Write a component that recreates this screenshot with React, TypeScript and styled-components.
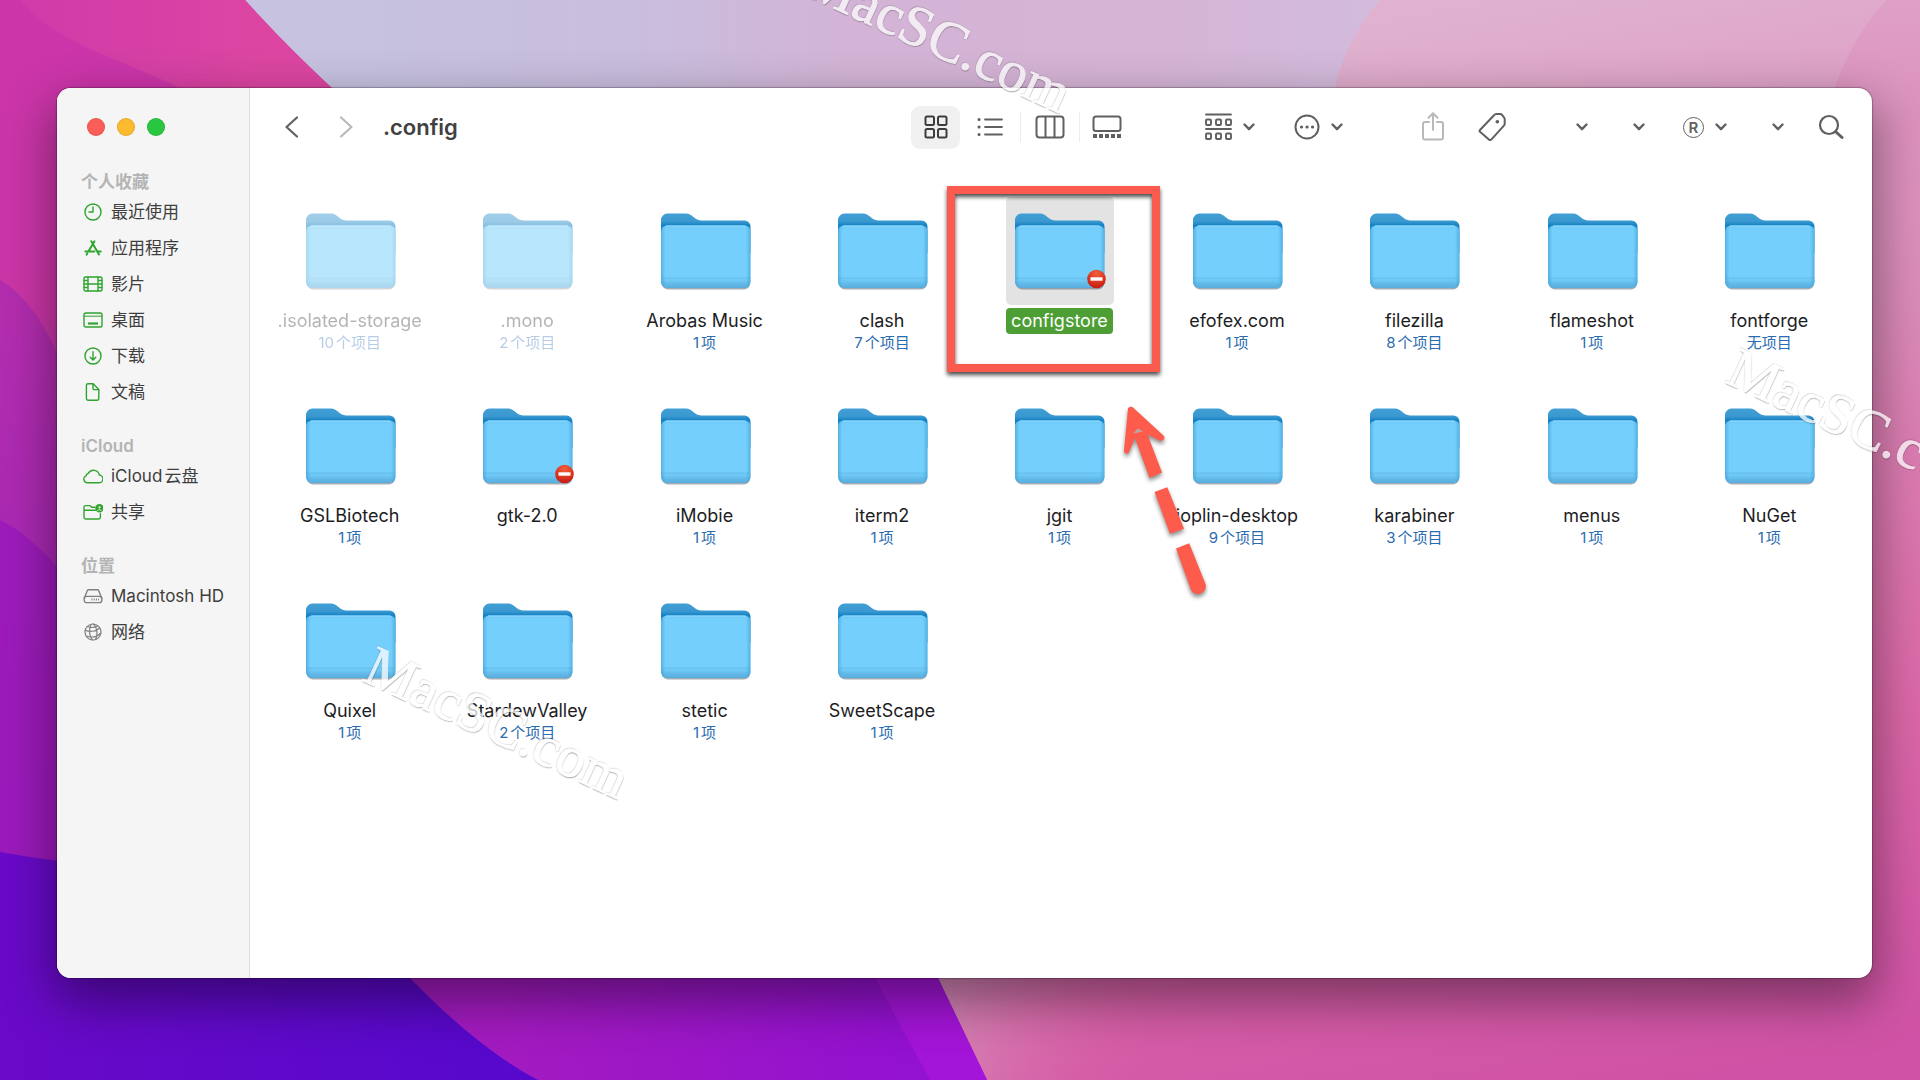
import React from 'react';
import styled, { createGlobalStyle, css } from 'styled-components';

const GlobalStyle = createGlobalStyle`
  *, *::before, *::after { box-sizing: border-box; }
  body {
    margin: 0;
    font-family: Inter, "Noto Sans CJK SC", sans-serif;
    color: #1d1d1f;
    text-autospace: normal;
  }
  button { border: 0; padding: 0; background: none; font: inherit; color: inherit; }
  ul { list-style: none; margin: 0; padding: 0; }
  svg { display: block; }
`;

/* ---------- Desktop ---------- */

const Desktop = styled.div`
  position: relative;
  display: flex;
  min-height: 100vh;
  padding: 88px 48px 102px 57px;
  overflow: hidden;
`;

const WallpaperSvg = styled.svg`
  position: absolute;
  inset: 0;
  width: 100%;
  height: 100%;
`;

const Wallpaper = () => (
  <WallpaperSvg viewBox="0 0 1920 1080" preserveAspectRatio="none" aria-hidden="true">
    <defs>
      <linearGradient id="wpTop" x1="0" x2="1" y1="0" y2="0">
        <stop offset="0.12" stopColor="#c6c2e0" />
        <stop offset="0.38" stopColor="#c9bddd" />
        <stop offset="0.55" stopColor="#d3b4d6" />
        <stop offset="0.8" stopColor="#d6b4d6" />
        <stop offset="1" stopColor="#d2bbdc" />
      </linearGradient>
      <linearGradient id="wpRight" gradientUnits="userSpaceOnUse" x1="1500" x2="1700" y1="0" y2="1080">
        <stop offset="0" stopColor="#e0b2d0" />
        <stop offset="0.3" stopColor="#dc8dba" />
        <stop offset="0.7" stopColor="#dc68a8" />
        <stop offset="1" stopColor="#d052a6" />
      </linearGradient>
      <linearGradient id="wpBottom" gradientUnits="userSpaceOnUse" x1="930" x2="1150" y1="980" y2="1050">
        <stop offset="0" stopColor="#d48cba" />
        <stop offset="1" stopColor="#da64a2" stopOpacity="0" />
      </linearGradient>
      <linearGradient id="wpCorner" x1="0" x2="0" y1="0" y2="1">
        <stop offset="0" stopColor="#dfa0c6" />
        <stop offset="0.3" stopColor="#dc90bc" stopOpacity="0.9" />
        <stop offset="1" stopColor="#dc8ebb" stopOpacity="0" />
      </linearGradient>
      <linearGradient id="wpLeft" gradientUnits="userSpaceOnUse" x1="0" x2="120" y1="0" y2="900">
        <stop offset="0" stopColor="#cc35aa" />
        <stop offset="0.35" stopColor="#cb36a8" />
        <stop offset="0.6" stopColor="#b32bb2" />
        <stop offset="1" stopColor="#9620c0" />
      </linearGradient>
      <linearGradient id="wpPetal" gradientUnits="userSpaceOnUse" x1="20" x2="260" y1="0" y2="0">
        <stop offset="0" stopColor="#d03aaa" />
        <stop offset="1" stopColor="#dc46a2" />
      </linearGradient>
      <linearGradient id="wpMid" gradientUnits="userSpaceOnUse" x1="500" x2="900" y1="0" y2="0">
        <stop offset="0" stopColor="#a31bc0" />
        <stop offset="1" stopColor="#9311d0" />
      </linearGradient>
      <linearGradient id="wpBlue" x1="0" x2="1" y1="0" y2="0">
        <stop offset="0" stopColor="#6a0ac8" />
        <stop offset="1" stopColor="#5508cc" />
      </linearGradient>
    </defs>
    <rect width="1920" height="1080" fill="url(#wpRight)" />
    <rect x="800" y="900" width="500" height="180" fill="url(#wpBottom)" />
    <path d="M200 0H1380Q1345 40 1333 95V140H200Z" fill="url(#wpTop)" />
    <path d="M1920 0H1886Q1850 40 1830 100V420H1920Z" fill="url(#wpCorner)" />
    <path d="M0 0H245Q290 50 345 100L960 1080H0Z" fill="url(#wpLeft)" />
    <path d="M20 0H245Q290 50 345 100H200C150 66 60 50 20 0Z" fill="url(#wpPetal)" />
    <path d="M0 280Q35 300 60 360V1080H0Z" fill="#a428b4" opacity="0.6" />
    <path d="M0 520Q30 535 60 570V1080H0Z" fill="#9a18bc" opacity="0.8" />
    <path d="M300 900H901L938 978L987 1080H300Z" fill="url(#wpMid)" />
    <path d="M833 900H901L938 978L987 1080H930L875 978Z" fill="#a315d8" />
    <path d="M0 852C150 878 320 880 410 978Q480 1050 538 1080H0Z" fill="url(#wpBlue)" />
  </WallpaperSvg>
);

const Window = styled.main`
  position: relative;
  display: flex;
  flex: 1;
  min-width: 0;
  border-radius: 14px;
  background: #fff;
  box-shadow: 0 0 1px 1px rgba(0, 0, 0, 0.25), 0 20px 50px 4px rgba(0, 0, 0, 0.42);
`;

/* ---------- Sidebar ---------- */

const Sidebar = styled.aside`
  display: flex;
  flex-direction: column;
  flex: none;
  width: 193px;
  padding: 30px 0 24px;
  border-right: 1px solid #dcdcdc;
  border-radius: 14px 0 0 14px;
  background: #f5f5f5;
`;

const Lights = styled.div`
  display: flex;
  gap: 12px;
  padding: 0 0 10px 30px;
`;

const Light = styled.button<{ $color: string }>`
  width: 18px;
  height: 18px;
  border-radius: 50%;
  background: ${(p) => p.$color};
  box-shadow: inset 0 0 0 1px rgba(0, 0, 0, 0.1);
`;

const SideSection = styled.section`
  padding: 24px 0 0 24px;
`;

const SideHeading = styled.h2`
  margin: 0;
  font-size: 17px;
  line-height: 24px;
  font-weight: 600;
  color: #b4b4b4;
`;

const SideLink = styled.a<{ $tone: string }>`
  display: flex;
  align-items: center;
  gap: 8px;
  height: 36px;
  padding-left: 2px;
  font-size: 17px;
  line-height: 24px;
  color: #3e3e3e;
  text-decoration: none;
  white-space: nowrap;
  svg { flex: none; color: ${(p) => p.$tone}; }
`;

const SideSvg = ({ children }: { children: React.ReactNode }) => (
  <svg
    width="20"
    height="20"
    viewBox="0 0 20 20"
    fill="none"
    stroke="currentColor"
    strokeWidth="1.4"
    strokeLinecap="round"
    strokeLinejoin="round"
    aria-hidden="true"
  >
    {children}
  </svg>
);

const sideIcons: Record<string, React.ReactNode> = {
  clock: (
    <>
      <circle cx="10" cy="10" r="8" />
      <path d="M10 5v5H6" />
    </>
  ),
  apps: (
    <g strokeWidth="2">
      <path d="M8.3 3.2 16 16.4M11.4 3.4 5.5 13.2M2.4 13.4h9M15 13.4h2.7M4.3 15.6l-.6 1" />
    </g>
  ),
  film: (
    <>
      <rect x="1" y="3" width="18" height="14" rx="1.5" />
      <path d="M5 3v14M15 3v14M5 10h10M1 6.5h4M1 10h4M1 13.5h4M15 6.5h4M15 10h4M15 13.5h4" />
    </>
  ),
  desktop: (
    <>
      <rect x="1" y="3" width="18" height="14" rx="1.8" />
      <path d="M1 6.2h18" strokeWidth="1" />
      <path d="M5 13.5h10" strokeWidth="2.2" strokeLinecap="butt" />
    </>
  ),
  download: (
    <>
      <circle cx="10" cy="10" r="8" />
      <path d="M10 5.8v8M7.2 11.2 10 14l2.8-2.8" />
    </>
  ),
  doc: (
    <path d="M5 1.8h5.2l5.6 5.6v9.2a1.6 1.6 0 0 1-1.6 1.6H5a1.6 1.6 0 0 1-1.6-1.6V3.4A1.6 1.6 0 0 1 5 1.8ZM10 2v4.400c0 .8.4 1.200 1.200 1.200h4.400" />
  ),
  cloud: (
    <path d="M4.500 16.800h11.200a3.900 3.900 0 0 0 .6-7.800A5.900 5.900 0 0 0 5.300 7.400 3 3 0 0 0 3 9.900 3.600 3.600 0 0 0 4.500 16.800Z" />
  ),
  shared: (
    <>
      <path d="M12 5.2H8.500L7.200 3.600H2.500a1.500 1.500 0 0 0-1.500 1.500v10.200A1.700 1.700 0 0 0 2.700 17h13a1.700 1.700 0 0 0 1.700-1.700v-3.500M1 8.200h11.500" />
      <circle cx="16.500" cy="6.200" r="3.500" fill="currentColor" />
      <path d="M14.800 8.400c.4-1.200 3-1.200 3.400 0" stroke="#f5f5f5" strokeWidth="1" />
      <circle cx="16.500" cy="5.300" r="1.100" fill="#f5f5f5" stroke="none" />
    </>
  ),
  disk: (
    <>
      <path d="M1.200 12.200 4.300 4.800a1.600 1.600 0 0 1 1.500-1h8.400a1.600 1.600 0 0 1 1.500 1l3.100 7.400" />
      <rect x="1.200" y="10.400" width="17.600" height="6.200" rx="2.400" />
      <path d="M8.500 13.500h7.500" strokeWidth="1.800" strokeDasharray="1 1.200" strokeLinecap="butt" />
    </>
  ),
  globe: (
    <g strokeWidth="1.200">
      <circle cx="10" cy="10" r="8" />
      <path d="M2.300 8.200c4 2 10.400 1.600 14.400-2.200M3.200 14c4.600 1.600 10.500 1 14.600-2.800M8.400 2.200C5.400 7 6 13.500 9.500 18M10.600 2c3.800 4.200 4.400 10.600 2 15.400M4.500 4.500c3.500 1.400 7.500 1 10-.6" />
    </g>
  ),
};

const GREEN = '#2fa52f';
const GREY = '#808080';

const sections = [
  {
    title: '个人收藏',
    tone: GREEN,
    items: [
      ['clock', '最近使用'],
      ['apps', '应用程序'],
      ['film', '影片'],
      ['desktop', '桌面'],
      ['download', '下载'],
      ['doc', '文稿'],
    ],
  },
  {
    title: 'iCloud',
    tone: GREEN,
    items: [
      ['cloud', 'iCloud云盘'],
      ['shared', '共享'],
    ],
  },
  {
    title: '位置',
    tone: GREY,
    items: [
      ['disk', 'Macintosh HD'],
      ['globe', '网络'],
    ],
  },
];

/* ---------- Toolbar ---------- */

const Content = styled.div`
  display: flex;
  flex-direction: column;
  flex: 1;
  min-width: 0;
`;

const Toolbar = styled.header`
  display: flex;
  align-items: center;
  justify-content: space-between;
  height: 78px;
  padding: 0 28px 0 34px;
  color: #606060;
`;

const Cluster = styled.div<{ $gap: number }>`
  display: flex;
  align-items: center;
  gap: ${(p) => p.$gap}px;
`;

const Title = styled.h1`
  margin: 0;
  font-size: 22px;
  line-height: 28px;
  font-weight: 600;
  color: #414141;
`;

const IconButton = styled.button<{ $faded?: boolean }>`
  display: flex;
  align-items: center;
  gap: 11px;
  flex: none;
  ${(p) => p.$faded && css`color: #b9b9b9;`}
`;

const ViewButton = styled.button<{ $width: number; $active?: boolean }>`
  display: grid;
  place-items: center;
  width: ${(p) => p.$width}px;
  height: 43px;
  border-radius: 9px;
  ${(p) => p.$active && css`
    background: #f0f0f0;
    color: #3c3c3c;
  `}
`;

const Divider = styled.span`
  width: 1px;
  height: 30px;
  background: #ececec;
`;

const Registered = styled.span`
  display: grid;
  place-items: center;
  width: 21px;
  height: 21px;
  border: 1px solid currentColor;
  border-radius: 50%;
  font-size: 15px;
  line-height: 19px;
  font-weight: 600;
`;

const ToolSvg = ({ w, h, sw = 2, children }: { w: number; h: number; sw?: number; children: React.ReactNode }) => (
  <svg
    width={w}
    height={h}
    viewBox={`0 0 ${w} ${h}`}
    fill="none"
    stroke="currentColor"
    strokeWidth={sw}
    strokeLinecap="round"
    strokeLinejoin="round"
    aria-hidden="true"
  >
    {children}
  </svg>
);

const Chevron = () => (
  <ToolSvg w={12} h={8} sw={2.4}>
    <path d="M1.500 1.500 6 6.200l4.500-4.700" />
  </ToolSvg>
);

const ToolbarBar = () => (
  <Toolbar>
    <Cluster $gap={29}>
      <Cluster $gap={38}>
        <IconButton aria-label="后退">
          <ToolSvg w={16} h={24} sw={2.2}>
            <path d="M13 2.500 2.500 12 13 21.500" />
          </ToolSvg>
        </IconButton>
        <IconButton $faded aria-label="前进">
          <ToolSvg w={16} h={24} sw={2.200}>
            <path d="M3 2.500 13.500 12 3 21.500" />
          </ToolSvg>
        </IconButton>
      </Cluster>
      <Title>.config</Title>
    </Cluster>

    <Cluster $gap={72}>
      <Cluster $gap={0}>
        <ViewButton $width={49} $active aria-label="图标">
          <ToolSvg w={24} h={24}>
            <rect x="1.500" y="1.500" width="8.500" height="8.500" rx="1.500" />
            <rect x="14" y="1.500" width="8.500" height="8.500" rx="1.500" />
            <rect x="1.500" y="14" width="8.500" height="8.500" rx="1.500" />
            <rect x="14" y="14" width="8.500" height="8.500" rx="1.500" />
          </ToolSvg>
        </ViewButton>
        <ViewButton $width={60} aria-label="列表">
          <ToolSvg w={26} h={20} sw={1.800}>
            <path d="M8 2.500h17M8 10h17M8 17.500h17" />
            <g strokeWidth="3">
              <path d="M2 2.500h.1M2 10h.1M2 17.500h.1" />
            </g>
          </ToolSvg>
        </ViewButton>
        <Divider />
        <ViewButton $width={58} aria-label="分栏">
          <ToolSvg w={30} h={24}>
            <rect x="1.500" y="1.500" width="27" height="21" rx="3" />
            <path d="M10.500 2v20M19.500 2v20" />
          </ToolSvg>
        </ViewButton>
        <Divider />
        <ViewButton $width={53} aria-label="画廊">
          <ToolSvg w={30} h={24}>
            <rect x="1.500" y="1.500" width="27" height="14.500" rx="2.500" />
            <path d="M1 21h28" strokeWidth="4" strokeDasharray="4 2" strokeLinecap="butt" />
          </ToolSvg>
        </ViewButton>
      </Cluster>

      <Cluster $gap={78}>
        <Cluster $gap={39}>
          <IconButton aria-label="分组">
            <ToolSvg w={27} h={28} sw={1.900}>
              <path d="M1 1.500h25M1 16h25" />
              <rect x="1" y="6.500" width="5" height="5.500" rx="1" />
              <rect x="11" y="6.500" width="5" height="5.500" rx="1" />
              <rect x="21" y="6.500" width="5" height="5.500" rx="1" />
              <rect x="1" y="20.500" width="5" height="5.500" rx="1" />
              <rect x="11" y="20.500" width="5" height="5.500" rx="1" />
              <rect x="21" y="20.500" width="5" height="5.500" rx="1" />
            </ToolSvg>
            <Chevron />
          </IconButton>
          <IconButton aria-label="操作">
            <ToolSvg w={26} h={26}>
              <circle cx="13" cy="13" r="11.500" />
              <path d="M7.500 13h.1M13 13h.1M18.500 13h.1" strokeWidth="3.200" />
            </ToolSvg>
            <Chevron />
          </IconButton>
        </Cluster>

        <Cluster $gap={70}>
          <Cluster $gap={33}>
            <IconButton $faded aria-label="共享">
              <ToolSvg w={24} h={32}>
                <path d="M8 11H4a2 2 0 0 0-2 2v13.500a2 2 0 0 0 2 2h16a2 2 0 0 0 2-2V13a2 2 0 0 0-2-2h-4" />
                <path d="M12 19V2.500M7.500 6.800 12 2.300l4.500 4.500" />
              </ToolSvg>
            </IconButton>
            <IconButton aria-label="标签">
              <ToolSvg w={28} h={30}>
                <path d="M2 18 16 3.200A3.500 3.500 0 0 1 18.500 2H22a2.500 2.500 0 0 1 2 .8l2 2.600a3 3 0 0 1 .700 2v4a3.500 3.500 0 0 1-1 2.500L13.500 27.300a2 2 0 0 1-2.900 0L2 19.800a1.300 1.300 0 0 1 0-1.800Z" />
                <path d="M19.300 9.800h.1" strokeWidth="3.600" />
              </ToolSvg>
            </IconButton>
          </Cluster>

          <Cluster $gap={34}>
            <Cluster $gap={45}>
              <Cluster $gap={38}>
                <Cluster $gap={45}>
                  <IconButton aria-label="菜单一"><Chevron /></IconButton>
                  <IconButton aria-label="菜单二"><Chevron /></IconButton>
                </Cluster>
                <IconButton aria-label="注册标记">
                  <Registered>R</Registered>
                  <Chevron />
                </IconButton>
              </Cluster>
              <IconButton aria-label="菜单三"><Chevron /></IconButton>
            </Cluster>
            <IconButton aria-label="搜索">
              <ToolSvg w={26} h={26} sw={2.200}>
                <circle cx="11" cy="11" r="9" />
                <path d="m18 18 6 5.500" strokeWidth="3" />
              </ToolSvg>
            </IconButton>
          </Cluster>
        </Cluster>
      </Cluster>
    </Cluster>
  </Toolbar>
);

/* ---------- Folder grid ---------- */

const Grid = styled.ul`
  display: grid;
  grid-template-columns: repeat(9, 1fr);
  gap: 38px 0;
  padding: 31px 14px 48px 11px;
`;

const Cell = styled.li`
  position: relative;
  display: flex;
  justify-content: center;
`;

const FolderButton = styled.button<{ $dimmed?: boolean }>`
  display: flex;
  flex-direction: column;
  align-items: center;
  height: 157px;
  opacity: ${(p) => (p.$dimmed ? 0.5 : 1)};
`;

const IconBox = styled.span<{ $selected?: boolean }>`
  display: grid;
  place-items: center;
  width: 108px;
  height: 108px;
  margin: 0 0 3px 2px;
  border-radius: 5px;
  background: ${(p) => (p.$selected ? '#e3e3e3' : 'transparent')};
`;

const Name = styled.span<{ $selected?: boolean; $dimmed?: boolean }>`
  padding: 0 5px;
  border-radius: 4px;
  font-size: 18px;
  line-height: 26px;
  white-space: nowrap;
  ${(p) => p.$dimmed && css`color: #6a6a6a;`}
  ${(p) => p.$selected && css`
    background: #4d9e34;
    color: #fff;
  `}
`;

const Count = styled.span<{ $dimmed?: boolean }>`
  font-size: 15px;
  line-height: 18px;
  color: ${(p) => (p.$dimmed ? '#6f9ccc' : '#2a6cb0')};
`;

const FolderDefs = () => (
  <svg width="0" height="0" style={{ position: 'absolute' }} aria-hidden="true">
    <defs>
      <linearGradient id="folderBack" x1="0" x2="0" y1="0" y2="1">
        <stop offset="0" stopColor="#419fd5" />
        <stop offset="0.2" stopColor="#3a98d0" />
        <stop offset="0.3" stopColor="#1482c4" />
        <stop offset="1" stopColor="#1482c4" />
      </linearGradient>
      <linearGradient id="folderFront" x1="0" x2="0" y1="0" y2="1">
        <stop offset="0" stopColor="#6fcaf8" />
        <stop offset="0.08" stopColor="#74cffc" />
        <stop offset="0.82" stopColor="#74cffc" />
        <stop offset="0.84" stopColor="#68c0ee" />
        <stop offset="0.87" stopColor="#70caf8" />
        <stop offset="0.92" stopColor="#64bcea" />
        <stop offset="1" stopColor="#58acdc" />
      </linearGradient>
      <linearGradient id="folderEdge" x1="0" x2="1" y1="0" y2="0">
        <stop offset="0" stopColor="#3e9ed2" stopOpacity="0.6" />
        <stop offset="0.05" stopColor="#3e9ed2" stopOpacity="0" />
        <stop offset="0.95" stopColor="#3e9ed2" stopOpacity="0" />
        <stop offset="1" stopColor="#3e9ed2" stopOpacity="0.6" />
      </linearGradient>
      <radialGradient id="badge" cx="0.5" cy="0.2" r="0.8">
        <stop offset="0" stopColor="#f0603c" />
        <stop offset="1" stopColor="#c91a10" />
      </radialGradient>
    </defs>
  </svg>
);

const Folder = ({ locked }: { locked?: boolean }) => (
  <svg width="94" height="80" viewBox="-2 -2 94 80" aria-hidden="true">
    <rect x="1" y="20" width="88" height="56.500" rx="6" fill="#5a6a78" opacity="0.55" />
    <path
      d="M0 7a6.500 6.500 0 0 1 6.500-6.500h18.500c6 0 8 6.500 15 7H83.500a6 6 0 0 1 6 6V40H0Z"
      fill="url(#folderBack)"
    />
    <rect x="0" y="12.500" width="89.500" height="62.500" rx="6" fill="url(#folderFront)" />
    <rect x="0" y="12.500" width="89.500" height="62.500" rx="6" fill="url(#folderEdge)" />
    <path d="M5 13h79.500" stroke="#93dcff" strokeWidth="1" />
    {locked && (
      <>
        <circle cx="81.500" cy="66" r="9.300" fill="url(#badge)" />
        <rect x="75.500" y="64.300" width="12" height="3.400" fill="#fff" />
      </>
    )}
  </svg>
);

const Highlight = styled.span`
  position: absolute;
  z-index: 2;
  top: -11px;
  left: calc(50% - 113px);
  width: 213px;
  height: 186px;
  border: 8px solid #fa5b4e;
  filter: drop-shadow(0 3px 2px rgba(0, 0, 0, 0.7));
  pointer-events: none;
`;

const ArrowSvg = styled.svg`
  position: absolute;
  z-index: 2;
  top: 198px;
  left: calc(50% + 51px);
  overflow: visible;
  filter: drop-shadow(0 3px 2px rgba(0, 0, 0, 0.45));
  pointer-events: none;
`;

const Annotation = () => (
  <>
    <Highlight />
    <ArrowSvg width="110" height="210" viewBox="1110 394 110 210" aria-hidden="true">
      <g fill="#fd5b4c">
        <path d="M1128 407.500c1-2 3.500-2.400 5-1L1163.500 434.500c2.600 2.800-.6 6.500-4 5l-12-6L1162 471.500 1149.500 477 1135 437 1129 451c-1.200 2.600-5.200 1.600-5-1.500Z" />
        <path d="M1154.500 491 1167.300 486.200 1184 527.800 1170 532.800Z" />
        <path d="M1176 547.500 1189.200 542.200 1205.500 583c2.500 8.500-10 14.500-14.500 6Z" />
      </g>
      <path d="M1133.500 432.500l4-5 5.500 3Z" fill="#b9a8a8" />
    </ArrowSvg>
  </>
);

type Item = { name: string; count?: string; dimmed?: boolean; selected?: boolean; locked?: boolean };

const folders: Item[] = [
  { name: '.isolated-storage', count: '10个项目', dimmed: true },
  { name: '.mono', count: '2个项目', dimmed: true },
  { name: 'Arobas Music', count: '1项' },
  { name: 'clash', count: '7个项目' },
  { name: 'configstore', selected: true, locked: true },
  { name: 'efofex.com', count: '1项' },
  { name: 'filezilla', count: '8个项目' },
  { name: 'flameshot', count: '1项' },
  { name: 'fontforge', count: '无项目' },
  { name: 'GSLBiotech', count: '1项' },
  { name: 'gtk-2.0', locked: true },
  { name: 'iMobie', count: '1项' },
  { name: 'iterm2', count: '1项' },
  { name: 'jgit', count: '1项' },
  { name: 'joplin-desktop', count: '9个项目' },
  { name: 'karabiner', count: '3个项目' },
  { name: 'menus', count: '1项' },
  { name: 'NuGet', count: '1项' },
  { name: 'Quixel', count: '1项' },
  { name: 'StardewValley', count: '2个项目' },
  { name: 'stetic', count: '1项' },
  { name: 'SweetScape', count: '1项' },
];

/* ---------- Watermark ---------- */

const Mark = styled.span<{ $left: string; $top: string }>`
  position: absolute;
  z-index: 3;
  left: ${(p) => p.$left};
  top: ${(p) => p.$top};
  font-family: "Liberation Serif", serif;
  font-size: 57px;
  line-height: 56px;
  color: #fff;
  -webkit-text-stroke: 1px #fff;
  text-shadow: 1px 1px 1px rgba(0, 0, 0, 0.35), -1px -1px 1px rgba(0, 0, 0, 0.22), 0 1px 2px rgba(0, 0, 0, 0.25);
  opacity: 0.74;
  transform: rotate(25deg);
  transform-origin: left bottom;
  white-space: nowrap;
  pointer-events: none;
`;

export default function App() {
  return (
    <Desktop>
      <GlobalStyle />
      <Wallpaper />
      <FolderDefs />
      <Window>
        <Sidebar>
          <Lights>
            <Light $color="#fb5e57" aria-label="关闭" />
            <Light $color="#fcba2e" aria-label="最小化" />
            <Light $color="#29c73f" aria-label="缩放" />
          </Lights>
          {sections.map((s) => (
            <SideSection key={s.title}>
              <SideHeading>{s.title}</SideHeading>
              <ul>
                {s.items.map(([icon, label]) => (
                  <li key={label}>
                    <SideLink href="#" $tone={s.tone}>
                      <SideSvg>{sideIcons[icon]}</SideSvg>
                      {label}
                    </SideLink>
                  </li>
                ))}
              </ul>
            </SideSection>
          ))}
        </Sidebar>
        <Content>
          <ToolbarBar />
          <Grid>
            {folders.map((f) => (
              <Cell key={f.name}>
                <FolderButton $dimmed={f.dimmed}>
                  <IconBox $selected={f.selected}>
                    <Folder locked={f.locked} />
                  </IconBox>
                  <Name $selected={f.selected} $dimmed={f.dimmed}>{f.name}</Name>
                  {f.count && <Count $dimmed={f.dimmed}>{f.count}</Count>}
                </FolderButton>
                {f.selected && <Annotation />}
              </Cell>
            ))}
          </Grid>
        </Content>
      </Window>
      <Mark $left="41.6%" $top="-54px">MacSC.com</Mark>
      <Mark $left="18.6%" $top="632px">MacSC.com</Mark>
      <Mark $left="89.6%" $top="334px">MacSC.com</Mark>
    </Desktop>
  );
}
